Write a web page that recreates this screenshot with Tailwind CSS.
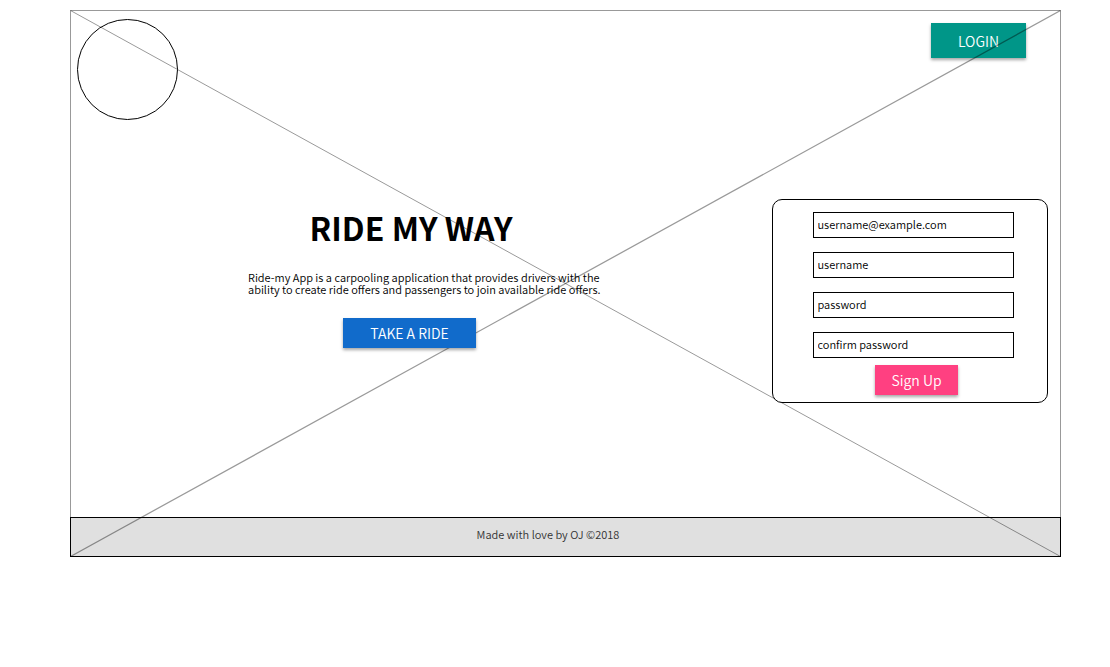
<!DOCTYPE html>
<html lang="en">
<head>
<meta charset="utf-8">
<meta name="viewport" content="width=device-width, initial-scale=1">
<title>Ride My Way</title>
<script src="https://cdn.jsdelivr.net/npm/@tailwindcss/browser@4"></script>
</head>
<body class="bg-white font-['Noto_Sans_CJK_SC',sans-serif] text-black">
<div class="relative mt-[10px] mr-[49px] ml-[70px] flex flex-col">
  <!-- Frame and its diagonals -->
  <svg class="pointer-events-none absolute inset-0 z-10 h-full w-full" aria-hidden="true" fill="none" stroke="#000" stroke-opacity="0.4">
    <svg x="0" y="0" width="100%" height="100%" viewBox="0 0 991 547" preserveAspectRatio="none">
      <path d="M.5 507V.5H990.5V507" vector-effect="non-scaling-stroke"/>
      <path d="M.5 .5L990.5 546.5" vector-effect="non-scaling-stroke"/>
      <path d="M990.5 .5L.5 546.5" stroke-width="1.25" vector-effect="non-scaling-stroke"/>
    </svg>
  </svg>

  <header class="flex items-start justify-between pt-[9px] pr-[35px] pl-[7px]">
    <div class="size-[101px] rounded-full border border-black"></div>
    <button type="button" class="mt-1 h-[35px] w-[95px] bg-[#009688] text-sm font-[350] text-white shadow-[0_2px_3px_rgba(0,0,0,0.35)]">LOGIN</button>
  </header>

  <main class="flex items-start justify-between pt-[79px] pr-[13px] pb-[114px] pl-[178px]">
    <section class="flex w-[348px] flex-col items-center">
      <h1 class="pt-2 pr-[22px] text-[32px] leading-10 font-bold whitespace-nowrap">RIDE MY WAY</h1>
      <p class="mt-6 w-full text-[11px] leading-3 font-[350] whitespace-nowrap">Ride-my App is a carpooling application that provides drivers with the<br>ability to create ride offers and passengers to join available ride offers.</p>
      <div class="pt-[23px] pr-[25px]">
        <button type="button" class="relative z-20 block h-[30px] w-[133px] bg-[#116bcb] text-sm font-[350] text-white shadow-[0_2px_3px_rgba(0,0,0,0.35)]">TAKE A RIDE</button>
      </div>
    </section>

    <form class="relative z-20 flex w-[276px] flex-col items-center rounded-[10px] border border-black bg-white pt-3 pb-[7px]">
      <div class="flex flex-col gap-[14px] pl-1.5">
        <input type="email" aria-label="Email" placeholder="username@example.com" class="h-[26px] w-[201px] border border-black px-1 pb-0.5 text-[11px] font-[350] placeholder:text-black">
        <input type="text" aria-label="Username" placeholder="username" class="h-[26px] w-[201px] border border-black px-1 pb-0.5 text-[11px] font-[350] placeholder:text-black">
        <input type="password" aria-label="Password" placeholder="password" class="h-[26px] w-[201px] border border-black px-1 pb-0.5 text-[11px] font-[350] placeholder:text-black">
        <input type="password" aria-label="Confirm password" placeholder="confirm password" class="h-[26px] w-[201px] border border-black px-1 pb-0.5 text-[11px] font-[350] placeholder:text-black">
      </div>
      <div class="pt-[7px] pl-[13px]">
        <button type="submit" class="block h-[30px] w-[83px] bg-[#ff4081] text-sm font-[350] text-white shadow-[0_2px_3px_rgba(0,0,0,0.35)]">Sign Up</button>
      </div>
    </form>
  </main>

  <footer class="flex h-10 items-center justify-center border border-black bg-[#e0e0e0] pr-[35px] pb-1.5 text-[11px] font-[350] text-[#333]">Made with love by OJ ©2018</footer>
</div>
</body>
</html>
